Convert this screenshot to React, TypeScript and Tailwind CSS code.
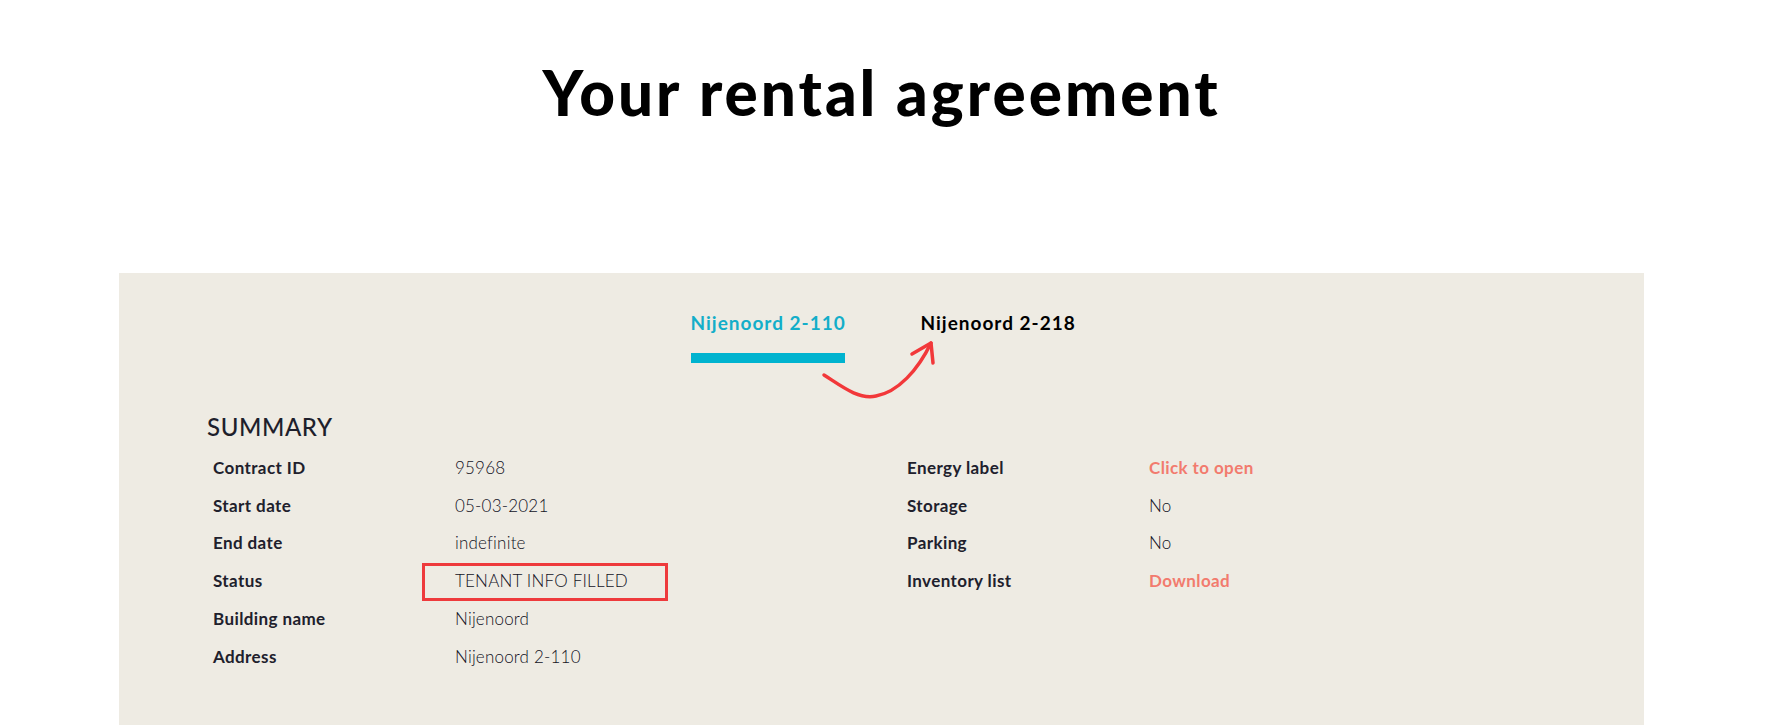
import React from "react";

const rowsLeft: { label: string; value: string; boxed?: boolean }[] = [
  { label: "Contract ID", value: "95968" },
  { label: "Start date", value: "05-03-2021" },
  { label: "End date", value: "indefinite" },
  { label: "Status", value: "TENANT INFO FILLED", boxed: true },
  { label: "Building name", value: "Nijenoord" },
  { label: "Address", value: "Nijenoord 2-110" },
];

const rowsRight: { label: string; value: string; link?: boolean }[] = [
  { label: "Energy label", value: "Click to open", link: true },
  { label: "Storage", value: "No" },
  { label: "Parking", value: "No" },
  { label: "Inventory list", value: "Download", link: true },
];

function Row({
  label,
  value,
  boxed,
  link,
}: {
  label: string;
  value: string;
  boxed?: boolean;
  link?: boolean;
}) {
  return (
    <div className="flex h-[37.8px] items-center text-[17px] leading-[20px]">
      <div className="w-[242px] font-bold tracking-[0.4px] text-[#20202c]">{label}</div>
      <div className="relative">
        {boxed && (
          <div className="absolute left-[-33px] top-[-8px] h-[38px] w-[246px] border-[3px] border-[#ee3a3c]" />
        )}
        <span
          className={
            link
              ? "font-bold tracking-[0.4px] text-[#f27b6e]"
              : "font-light tracking-[0.2px] text-[#12121f]"
          }
        >
          {value}
        </span>
      </div>
    </div>
  );
}

export default function App() {
  return (
    <div
      className="min-h-screen bg-white"
      style={{ fontFamily: "Lato, 'Noto Sans', sans-serif" }}
    >
      <div className="ml-[119px] w-[1525px]">
        <h1 className="pt-[61px] text-center text-[62px] font-black leading-none tracking-[3px] text-black">
          Your rental agreement
        </h1>
        <div className="relative mt-[150px] bg-[#eeebe3] pb-[80px] pt-[40px]">
          <div className="flex justify-center gap-[76px] text-[19px] font-bold leading-none tracking-[1px]">
            <div className="flex w-[154px] flex-col">
              <span className="whitespace-nowrap text-[#13aec9]">Nijenoord 2-110</span>
              <div className="mt-[21px] h-[10px] w-full bg-[#00b3cf]" />
            </div>
            <div className="w-[152px]">
              <span className="whitespace-nowrap text-black">Nijenoord 2-218</span>
            </div>
          </div>

          <svg
            className="absolute left-[681px] top-[57px]"
            width="150"
            height="80"
            viewBox="0 0 150 80"
            fill="none"
          >
            <path
              d="M24 45 C 40 55, 58 70, 76 66 C 98 62, 118 40, 131 13"
              stroke="#f2383a"
              strokeWidth="3.5"
              strokeLinecap="round"
            />
            <path
              d="M112 24 L131 13 L133 33"
              stroke="#f2383a"
              strokeWidth="3.5"
              strokeLinecap="round"
              strokeLinejoin="round"
            />
          </svg>

          <div className="pl-[88px]">
            <h2 className="mt-[52px] text-[24px] font-medium leading-none tracking-[0.6px] text-[#1e1f2c]">
              SUMMARY
            </h2>
            <div className="mt-[10px] flex pl-[6px]">
              <div className="w-[694px]">
                {rowsLeft.map((r) => (
                  <Row key={r.label} {...r} />
                ))}
              </div>
              <div>
                {rowsRight.map((r) => (
                  <Row key={r.label} {...r} />
                ))}
              </div>
            </div>
          </div>
        </div>
      </div>
    </div>
  );
}
